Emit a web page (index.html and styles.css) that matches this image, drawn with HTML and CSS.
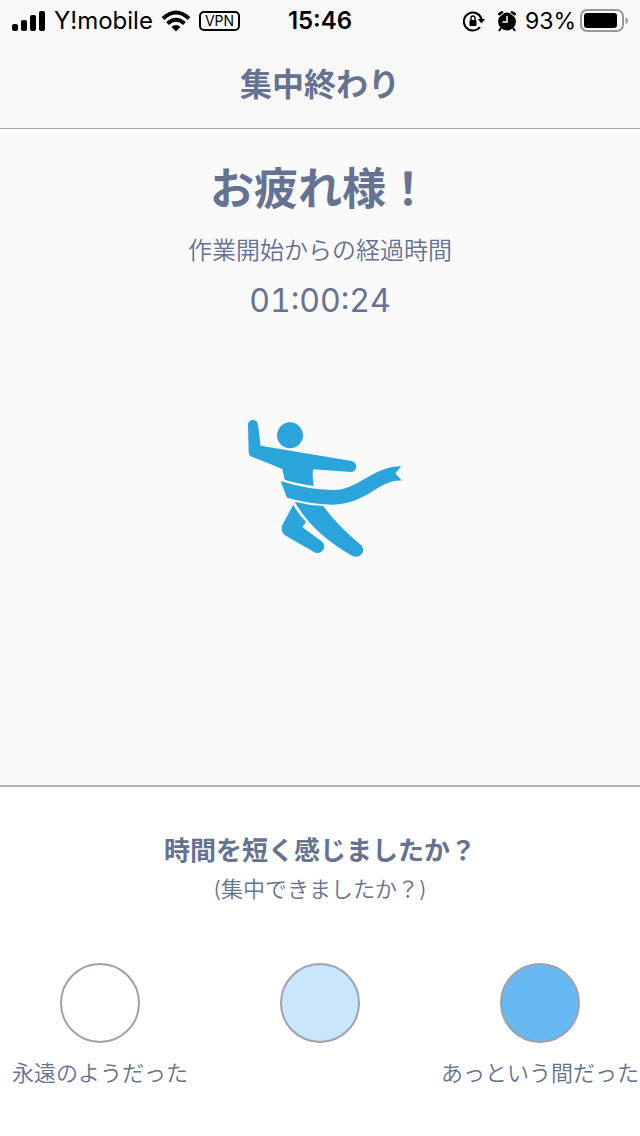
FILE: index.html
```html
<!DOCTYPE html>
<html lang="ja">
<head>
    <meta charset="UTF-8">
    <meta name="viewport" content="width=device-width, initial-scale=1.0">
    <title>集中終わり</title>
    <link rel="stylesheet" href="styles.css">
</head>
<body>
    <header class="header">
        <div class="status-bar">
            <div class="status-left">
                <svg class="signal" width="34" height="22" viewBox="0 0 34 22" aria-hidden="true">
                    <rect x="0" y="14" width="6" height="7" rx="2"/>
                    <rect x="9" y="10" width="6" height="11" rx="2"/>
                    <rect x="18" y="5" width="6" height="16" rx="2"/>
                    <rect x="27" y="1" width="6" height="20" rx="2"/>
                </svg>
                <span class="carrier">Y!mobile</span>
                <svg width="30" height="22" viewBox="0 0 30 22" aria-hidden="true">
                    <path d="M2 8.500Q15 -3.500 28 8.500" fill="none" stroke="#000" stroke-width="4"/>
                    <path d="M6.500 13.500Q15 6 23.500 13.500" fill="none" stroke="#000" stroke-width="4"/>
                    <path d="M10.500 17Q15 13 19.500 17L15 21.500Z"/>
                </svg>
                <span class="vpn">VPN</span>
            </div>
            <span class="clock">15:46</span>
            <div class="status-right">
                <svg class="rotation" width="22" height="22" viewBox="0 0 22 22" aria-hidden="true">
                    <path d="M18.500 9A9 9 0 1 0 17 17" fill="none" stroke="#000" stroke-width="2"/>
                    <path d="M14.800 9H22L18.400 13.500Z"/>
                    <rect x="6.500" y="10" width="7" height="6" rx="1"/>
                    <path d="M8 10V8a2 2 0 0 1 4 0V10" fill="none" stroke="#000" stroke-width="1.400"/>
                </svg>
                <svg class="alarm" width="20" height="22" viewBox="0 0 20 22" aria-hidden="true">
                    <circle cx="10" cy="11.500" r="9"/>
                    <path d="M2.500 4L5 2.500M17.500 4L15 2.500" stroke="#000" stroke-width="3" stroke-linecap="round"/>
                    <path d="M2 7L8 2M18 7L12 2" stroke="#f8f8f8" stroke-width="1"/>
                    <path d="M4 18L2 21M16 18L18 21" stroke="#000" stroke-width="2"/>
                    <path d="M10 6V12H5.500" fill="none" stroke="#fff" stroke-width="1.500"/>
                </svg>
                <span class="percent">93%</span>
                <svg width="48" height="24" viewBox="0 0 48 24" aria-hidden="true">
                    <rect x="1" y="1" width="42" height="21" rx="6" fill="none" stroke="#989898" stroke-width="2"/>
                    <rect x="4" y="4" width="33" height="15" rx="3"/>
                    <path d="M45.500 8Q48 9 48 11.500T45.500 15Z" fill="#989898"/>
                </svg>
            </div>
        </div>
        <h1 class="title">集中終わり</h1>
    </header>

    <main class="result">
        <h2 class="greeting">お疲れ様！</h2>
        <p class="caption">作業開始からの経過時間</p>
        <time class="elapsed" datetime="PT1H0M24S">01:00:24</time>
        <svg class="runner" viewBox="0 0 510 465" role="img" aria-label="ゴール">
            <circle cx="165" cy="76" r="39"/>
            <path d="M39 45C39 25 68 25 69 44L77 107L350 153C370 157 367 186 348 186L234 178L233 197L236 228Q188 221 149 209L142 177L50 140Q41 136 41 125Z"/>
            <path d="M137 213Q218 239 295 240C370 241 412 169 499 169L481 190L501 212C432 207 397 283 292 284Q218 281 156 263Z"/>
            <path d="M179 275Q222 286 265 288Q308 348 378 405C396 424 374 449 351 437Q232 370 179 275Z"/>
            <path d="M175 284Q190 313 213 336L202 352L259 393C278 409 262 434 241 428L150 376Q137 365 142 345Z"/>
        </svg>
    </main>

    <section class="survey">
        <h2 class="question">時間を短く感じましたか？</h2>
        <p class="hint">(集中できましたか？)</p>
        <div class="options">
            <button type="button" class="option">
                <span class="dot"></span>
                永遠のようだった
            </button>
            <button type="button" class="option" aria-label="普通">
                <span class="dot dot-light"></span>
            </button>
            <button type="button" class="option">
                <span class="dot dot-blue"></span>
                あっという間だった
            </button>
        </div>
    </section>
</body>
</html>
```
FILE: styles.css
```css
* {
    box-sizing: border-box;
}
body {
    font-family: Inter, "Noto Sans CJK JP", sans-serif;
    background-color: #fafafa;
    color: #667291;
    margin: 0;
    min-height: 100vh;
    display: flex;
    flex-direction: column;
    text-align: center;
}
h1, h2, p {
    margin: 0;
}
.header {
    background-color: #f8f8f8;
    border-bottom: 1px solid #a9a9ac;
    padding-bottom: 22px;
}
.status-bar {
    display: grid;
    grid-template-columns: 1fr auto 1fr;
    align-items: center;
    padding: 0 12px;
    color: #000;
    font-size: 24px;
    line-height: 42px;
}
.status-left, .status-right {
    display: flex;
    align-items: center;
}
.status-right {
    justify-content: flex-end;
}
.signal {
    margin-right: 8px;
}
.carrier {
    margin-right: 8px;
}
.vpn {
    border: 2px solid #000;
    border-radius: 5px;
    margin-left: 8px;
    padding: 0 4px;
    font-size: 14px;
    line-height: 16px;
}
.clock {
    font-weight: 600;
}
.rotation {
    margin-right: 12px;
}
.alarm {
    margin-right: 8px;
}
.percent {
    margin-right: 4px;
    font-size: 23px;
}
.title {
    margin-top: 16px;
    font-family: "Noto Sans CJK JP", sans-serif;
    font-size: 32px;
    font-weight: 700;
    line-height: 48px;
}
.result {
    flex: 1;
    display: flex;
    flex-direction: column;
    align-items: center;
    padding-top: 28px;
}
.greeting {
    font-size: 44px;
    font-weight: 700;
    line-height: 64px;
}
.caption {
    margin-top: 12px;
    font-size: 24px;
    font-weight: 350;
    line-height: 36px;
}
.elapsed {
    margin-top: 12px;
    font-size: 32px;
    font-variant-numeric: tabular-nums;
    line-height: 40px;
}
.runner {
    width: 170px;
    margin-top: 89px;
    fill: #2ba4dc;
}
.survey {
    background-color: #fff;
    border-top: 2px solid #b0b0bb;
    padding: 44px 0 45px;
}
.question {
    font-size: 26px;
    font-weight: 700;
    line-height: 40px;
}
.hint {
    font-size: 22px;
    font-weight: 350;
    line-height: 36px;
}
.options {
    display: grid;
    grid-template-columns: repeat(3, minmax(0, 1fr));
    column-gap: 20px;
    margin-top: 56px;
}
.option {
    display: flex;
    flex-direction: column;
    align-items: center;
    gap: 12px;
    padding: 0;
    border: none;
    background: none;
    color: inherit;
    font-family: inherit;
    font-size: 22px;
    font-weight: 350;
    line-height: 36px;
    white-space: nowrap;
    cursor: pointer;
}
.dot {
    width: 80px;
    height: 80px;
    border: 2px solid #a0a0ae;
    border-radius: 50%;
    background-color: #fff;
}
.dot-light {
    background-color: #c9e6fc;
}
.dot-blue {
    background-color: #68b9f1;
}
```
